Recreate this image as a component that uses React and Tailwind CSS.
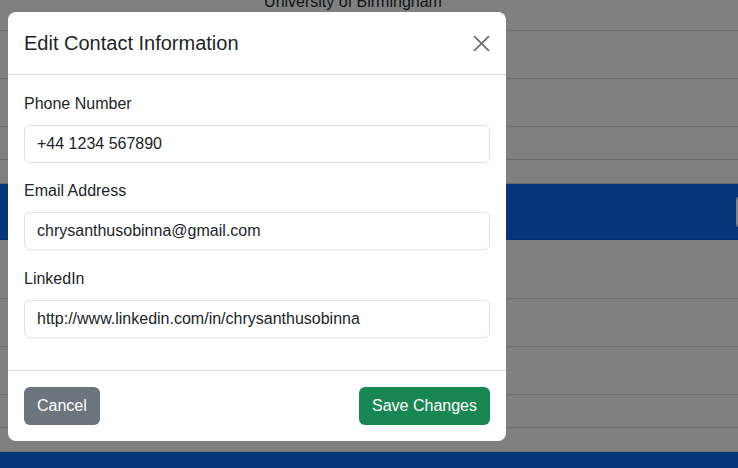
import React from 'react'

const rows = [
  { h: 'h-[31px]', text: 'University of Birmingham' },
  { h: 'h-[48px]' },
  { h: 'h-[48px]' },
  { h: 'h-[33px]' },
  { h: 'h-[24px]' },
  { h: 'h-[56px]', blue: true, button: true },
  { h: 'h-[59px]' },
  { h: 'h-[48px]' },
  { h: 'h-[48px]' },
  { h: 'h-[33px]' },
  { h: 'h-[24px]' },
  { h: 'h-[40px]', blue: true },
]

const fields = [
  { label: 'Phone Number', value: '+44 1234 567890', gap: 'mb-4' },
  { label: 'Email Address', value: 'chrysanthusobinna@gmail.com', gap: 'mb-[17px]' },
  { label: 'LinkedIn', value: 'http://www.linkedin.com/in/chrysanthusobinna', gap: 'mb-4' },
]

const App = () => {
  return (
    <div className="relative w-[738px] h-[468px] overflow-hidden bg-[#808080] font-['Liberation_Sans',Arial,sans-serif] text-base">
      {/* dimmed page behind the modal */}
      <div className="flex flex-col">
        {rows.map((r, i) => (
          <div
            key={i}
            className={`${r.h} relative shrink-0 border-b ${
              r.blue ? 'bg-[#06357a] border-[#05306d]' : 'border-[#6e6e6e]'
            }`}
          >
            {r.text && (
              <div className="-mt-[10px] leading-6 text-center text-[#111315] pr-[32px]">{r.text}</div>
            )}
            {r.button && (
              <div className="absolute right-[-30px] top-[12px] w-[32px] h-[32px] rounded-[4px] bg-[#7b7c7d] border border-[#7e8082]" />
            )}
          </div>
        ))}
      </div>

      {/* modal */}
      <div className="absolute inset-0 pl-[8px] pt-[12px]">
        <div className="w-[498px] bg-white rounded-lg text-[#212529]">
          <div className="flex items-center justify-between px-4 py-4 border-b border-[#dee2e6]">
            <h5 className="text-[20px] leading-[30px]">Edit Contact Information</h5>
            <button className="flex items-center justify-center text-[#6f6f6f]">
              <svg width="17" height="17" viewBox="0 0 16 16" fill="none" stroke="currentColor" strokeWidth="1.7">
                <path d="M1 1L15 15M15 1L1 15" />
              </svg>
            </button>
          </div>
          <div className="px-4 pt-[17px] pb-[16px]">
            {fields.map((f) => (
              <div key={f.label} className={f.gap}>
                <label className="block leading-6 mb-[9px]">{f.label}</label>
                <div className="h-[38px] flex items-center px-3 border border-[#dee2e6] rounded-md leading-6">
                  {f.value}
                </div>
              </div>
            ))}
          </div>
          <div className="flex items-center justify-between px-4 py-4 border-t border-[#dee2e6]">
            <button className="h-[38px] px-[13px] rounded-md bg-[#6c757d] text-white leading-6">Cancel</button>
            <button className="h-[38px] px-[12px] w-[131px] rounded-md bg-[#198754] text-white leading-6">Save Changes</button>
          </div>
        </div>
      </div>
    </div>
  )
}

export default App
